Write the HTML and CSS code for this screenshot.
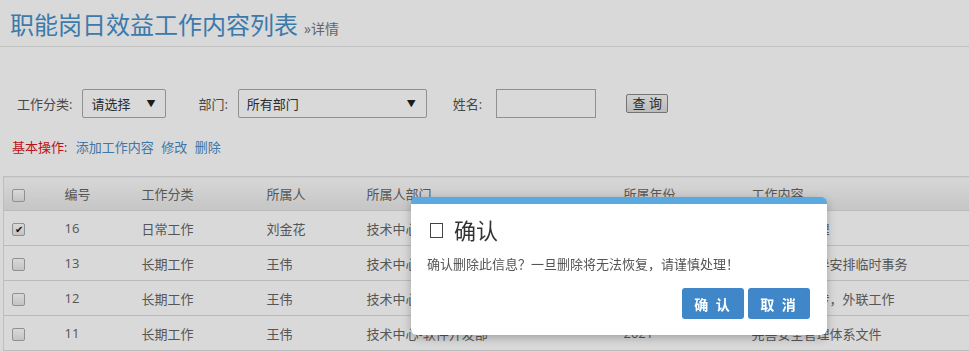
FILE: index.html
```html
<!DOCTYPE html>
<html lang="zh-CN">
<head>
    <meta charset="UTF-8">
    <title>职能岗日效益工作内容列表</title>
    <link rel="stylesheet" href="styles.css">
</head>
<body>
    <div class="page-head">
        <h1>职能岗日效益工作内容列表</h1>
        <span class="crumb">»详情</span>
    </div>

    <div class="filter">
        <label>工作分类:</label>
        <div class="select sel-type"><span>请选择</span><i>▼</i></div>
        <label class="lbl-dept">部门:</label>
        <div class="select sel-dept"><span>所有部门</span><i>▼</i></div>
        <label class="lbl-name">姓名:</label>
        <div class="input"></div>
        <button class="btn-query">查 询</button>
    </div>

    <div class="ops">
        <span class="ops-title">基本操作:</span>
        <a>添加工作内容</a>
        <a>修改</a>
        <a>删除</a>
    </div>

    <table class="grid">
        <colgroup>
            <col style="width:47px">
            <col style="width:77px">
            <col style="width:125px">
            <col style="width:100px">
            <col style="width:257px">
            <col style="width:128px">
            <col>
        </colgroup>
        <thead>
            <tr>
                <th><span class="chk"></span></th>
                <th>编号</th>
                <th>工作分类</th>
                <th>所属人</th>
                <th>所属人部门</th>
                <th>所属年份</th>
                <th>工作内容</th>
            </tr>
        </thead>
        <tbody>
            <tr>
                <td><span class="chk checked">✔</span></td>
                <td>16</td>
                <td>日常工作</td>
                <td>刘金花</td>
                <td>技术中心-软件开发部</td>
                <td>2021</td>
                <td>日常事务处理</td>
            </tr>
            <tr>
                <td><span class="chk"></span></td>
                <td>13</td>
                <td>长期工作</td>
                <td>王伟</td>
                <td>技术中心-软件开发部</td>
                <td>2021</td>
                <td>完成上级领导安排临时事务</td>
            </tr>
            <tr>
                <td><span class="chk"></span></td>
                <td>12</td>
                <td>长期工作</td>
                <td>王伟</td>
                <td>技术中心-软件开发部</td>
                <td>2021</td>
                <td>负责对外宣传，外联工作</td>
            </tr>
            <tr>
                <td><span class="chk"></span></td>
                <td>11</td>
                <td>长期工作</td>
                <td>王伟</td>
                <td>技术中心-软件开发部</td>
                <td>2021</td>
                <td>完善安全管理体系文件</td>
            </tr>
        </tbody>
    </table>

    <div class="mask"></div>

    <div class="dialog">
        <div class="dialog-title"><span class="icon"></span>确认</div>
        <p class="dialog-msg">确认删除此信息？一旦删除将无法恢复，请谨慎处理！</p>
        <div class="dialog-btns">
            <button class="btn-blue">确 认</button>
            <button class="btn-blue">取 消</button>
        </div>
    </div>
</body>
</html>
```

FILE: styles.css
```css
body {
    margin: 0;
    font-family: "Open Sans", "Noto Sans CJK SC", sans-serif;
    font-size: 13px;
    color: #666;
    background: #fff;
    overflow: hidden;
}
.page-head {
    display: flex;
    align-items: baseline;
    padding: 8px 10px 0;
    height: 38px;
    border-bottom: 1px solid #e4e4e4;
}
.page-head h1 {
    margin: 0;
    font-size: 24px;
    font-weight: normal;
    color: #4690c9;
    line-height: 34px;
}
.crumb {
    margin-left: 6px;
    font-size: 14px;
    color: #777;
}
.filter {
    display: flex;
    align-items: center;
    padding: 41px 0 0 17px;
    height: 30px;
}
.filter label {
    color: #555;
    margin-right: 10px;
}
.select {
    display: flex;
    align-items: center;
    justify-content: space-between;
    box-sizing: border-box;
    height: 29px;
    border: 1px solid #aaa;
    border-radius: 2px;
    padding: 0 10px 0 8px;
    color: #333;
}
.select i {
    font-style: normal;
    font-size: 9px;
    color: #222;
}
.sel-type { width: 84px; }
.lbl-dept { margin-left: 32px; }
.sel-dept { width: 189px; }
.lbl-name { margin-left: 26px; }
.input {
    box-sizing: border-box;
    width: 100px;
    height: 29px;
    margin-left: 4px;
    border: 1px solid #aaa;
}
.btn-query {
    margin-left: 30px;
    width: 42px;
    height: 19px;
    padding: 0;
    font-family: inherit;
    font-size: 13px;
    line-height: 17px;
    color: #333;
    border: 1px solid #888;
    border-radius: 2px;
    background: linear-gradient(#f6f6f6, #dcdcdc);
}
.ops {
    padding: 20px 0 0 12px;
    height: 38px;
    line-height: 18px;
}
.ops-title {
    color: #e0131a;
    margin-right: 5px;
}
.ops a {
    color: #4a8cc4;
    margin-right: 4px;
}
.grid {
    margin: 0 0 0 3px;
    width: 980px;
    table-layout: fixed;
    border-collapse: collapse;
    border-top: 1px solid #e0e0e0;
    border-left: 1px solid #e0e0e0;
}
.grid th,
.grid td {
    height: 34px;
    padding: 0 0 0 14px;
    text-align: left;
    white-space: nowrap;
    overflow: hidden;
    border-bottom: 1px solid #dcdcdc;
}
.grid th {
    height: 33px;
    font-weight: normal;
    color: #666;
    background: linear-gradient(#fdfdfd, #e8e8e8);
}
.grid th:first-child,
.grid td:first-child {
    padding-left: 8px;
}
.chk {
    display: inline-block;
    box-sizing: border-box;
    width: 13px;
    height: 13px;
    border: 1px solid #aaa;
    border-radius: 2px;
    background: linear-gradient(#fff, #e6e6e6);
    vertical-align: middle;
    font-size: 10px;
    line-height: 11px;
    text-align: center;
    color: #111;
}
.mask {
    position: fixed;
    left: 0;
    top: 0;
    right: 0;
    bottom: 0;
    background: rgba(0, 0, 0, 0.15);
}
.dialog {
    position: absolute;
    left: 411px;
    top: 197px;
    width: 416px;
    height: 138px;
    box-sizing: border-box;
    background: #fff;
    border-top: 7px solid #5aa9e0;
    border-radius: 6px;
    box-shadow: 0 3px 10px rgba(0, 0, 0, 0.25);
    padding: 0 17px 0 16px;
}
.dialog-title {
    display: flex;
    align-items: center;
    height: 50px;
    box-sizing: border-box;
    font-size: 22px;
    color: #333;
}
.dialog-title .icon {
    width: 11px;
    height: 13px;
    border: 1px solid #444;
    margin: 2px 11px 0 3px;
}
.dialog-msg {
    margin: 0;
    color: #555;
    line-height: 20px;
}
.dialog-btns {
    display: flex;
    justify-content: flex-end;
    gap: 4px;
    margin-top: 14px;
}
.btn-blue {
    width: 62px;
    height: 31px;
    border: none;
    border-radius: 3px;
    background: #3f87c9;
    color: #fff;
    font-family: inherit;
    font-size: 14px;
    font-weight: bold;
    letter-spacing: 2px;
}
```
